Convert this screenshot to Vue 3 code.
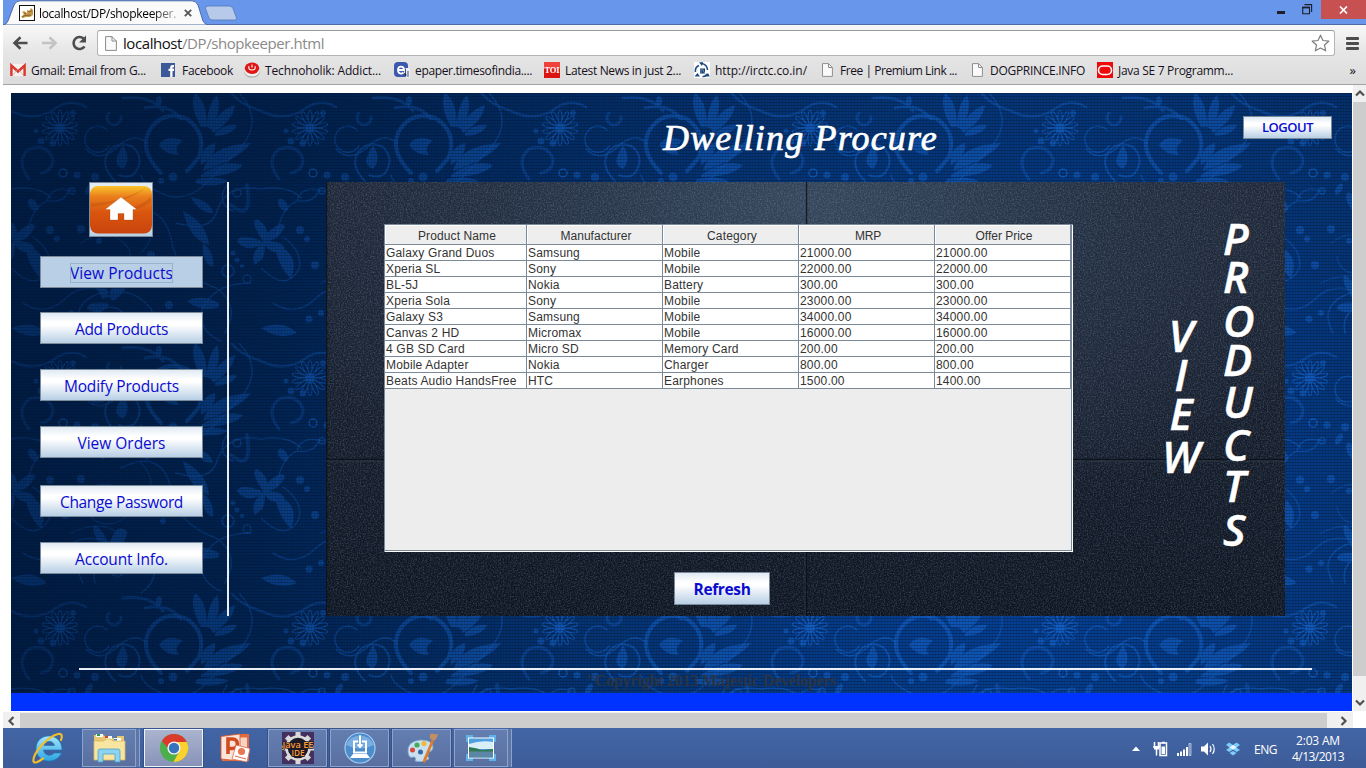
<script setup>
import { nextTick } from 'vue'

// Spreads or tightens the letters of a label so it fills the given width.
const vFit = {
  mounted(el, { value }) {
    nextTick(() => {
      el.style.letterSpacing = '0px'
      const w = el.getBoundingClientRect().width
      const n = el.textContent.length
      if (w && n > 1) el.style.letterSpacing = (value - w) / n + 'px'
    })
  },
}

const bookmarks = [
  { icon: 'gmail', text: 'Gmail: Email from G...', w: 115, slot: 151 },
  { icon: 'fb', text: 'Facebook', w: 51, slot: 83 },
  { icon: 'tech', text: 'Technoholik: Addict...', w: 116, slot: 150 },
  { icon: 'epaper', text: 'epaper.timesofindia....', w: 117, slot: 150 },
  { icon: 'toi', text: 'Latest News in just 2...', w: 116, slot: 150 },
  { icon: 'irctc', text: 'http://irctc.co.in/', w: 92, slot: 125 },
  { icon: 'doc', text: 'Free | Premium Link ...', w: 117, slot: 150 },
  { icon: 'doc', text: 'DOGPRINCE.INFO', w: 95, slot: 128 },
  { icon: 'oracle', text: 'Java SE 7 Programm...', w: 115, slot: 150 },
]

const menu = [
  { text: 'View Products', w: 103, gap: 0, active: true },
  { text: 'Add Products', w: 93, gap: 24 },
  { text: 'Modify Products', w: 115, gap: 25 },
  { text: 'View Orders', w: 88, gap: 25 },
  { text: 'Change Password', w: 123, gap: 27 },
  { text: 'Account Info.', w: 93, gap: 25 },
]

const heads = [
  { text: 'Product Name', w: 78 },
  { text: 'Manufacturer', w: 71 },
  { text: 'Category', w: 50 },
  { text: 'MRP', w: 26 },
  { text: 'Offer Price', w: 57 },
]
const rows = [
  ['Galaxy Grand Duos', 'Samsung', 'Mobile', '21000.00', '21000.00'],
  ['Xperia SL', 'Sony', 'Mobile', '22000.00', '22000.00'],
  ['BL-5J', 'Nokia', 'Battery', '300.00', '300.00'],
  ['Xperia Sola', 'Sony', 'Mobile', '23000.00', '23000.00'],
  ['Galaxy S3', 'Samsung', 'Mobile', '34000.00', '34000.00'],
  ['Canvas 2 HD', 'Micromax', 'Mobile', '16000.00', '16000.00'],
  ['4 GB SD Card', 'Micro SD', 'Memory Card', '200.00', '200.00'],
  ['Mobile Adapter', 'Nokia', 'Charger', '800.00', '800.00'],
  ['Beats Audio HandsFree', 'HTC', 'Earphones', '1500.00', '1400.00'],
]

const viewLetters = [
  ['V', 39], ['I', 39], ['E', 43], ['W', 40],
]
const productLetters = [
  ['P', 38], ['R', 44], ['O', 39], ['D', 42], ['U', 43], ['C', 41], ['T', 44], ['S', 40],
]
const petals = Array.from({ length: 14 }, (_, i) => (i * 360) / 14)
const teeth = Array.from({ length: 8 }, (_, i) => i * 45)
</script>

<template>
  <div class="screen">
    <!-- tab strip -->
    <div class="strip">
      <svg class="tabshape" width="240" height="25" viewBox="0 0 240 25">
        <path d="M202.500 8.500Q202 6 205 6H226Q229 6 230 8.500L233.500 18Q234 20 232 20H210Q207 20 206 18Z" fill="#b7cae9" stroke="#5378b8" stroke-width=".8" />
        <path d="M0 25Q3.500 24.500 5 21L11 5Q13 .8 17 .8H189Q193 .8 195 5L200 21Q202 25 206 25Z" fill="#fafafa" stroke="#4c6ba5" stroke-width="1" />
      </svg>
      <div class="tab">
        <svg width="16" height="16" viewBox="0 0 16 16">
          <rect x=".5" y=".5" width="15" height="15" fill="#fff" stroke="#111" />
          <path d="M2 12L5 9L3 7L5 6L8 8L8 5L10 6L12 3L14 5V10L11 12H7L4 13Z" fill="#c99a45" />
          <path d="M3 12L6 10.500L12 10M9 6L11 7L13 5.500M5 8L7 9" fill="none" stroke="#6b5534" stroke-width=".8" />
        </svg>
        <span class="tabtitle"><span v-fit="137">localhost/DP/shopkeeper.</span></span>
        <svg class="tabx" width="8" height="8" viewBox="0 0 8 8"><path d="M.8 .8L7.200 7.200M7.200 .8L.8 7.200" stroke="#555" stroke-width="1.800" /></svg>
      </div>
      <div class="winctl">
        <i class="min"></i>
        <svg width="11" height="11" viewBox="0 0 11 11"><path d="M.75 3.500V9.700H7.500V3.500Z M2.500 .6H9.600V8" fill="none" stroke="#1c1f2b" stroke-width="1.100" /><path d="M.2 3.500H8" stroke="#1c1f2b" stroke-width="1.800" /></svg>
        <div class="close"><svg width="9" height="8" viewBox="0 0 9 8"><path d="M1 .5L8 7.500M8 .5L1 7.500" stroke="#fff" stroke-width="1.700" /></svg></div>
      </div>
    </div>

    <!-- toolbar -->
    <div class="toolbar">
      <div class="nav">
        <svg width="80" height="18" viewBox="0 0 80 18">
          <path d="M15.500 9H3M8.500 3.200L2.500 9L8.500 14.800" fill="none" stroke="#4d4d4d" stroke-width="2.600" />
          <path d="M30 9H43M37.500 3.200L43.500 9L37.500 14.800" fill="none" stroke="#c3c3c3" stroke-width="2.600" />
          <path d="M72.500 12.500A6 6 0 1 1 71.500 4.500" fill="none" stroke="#4d4d4d" stroke-width="2.600" />
          <path d="M74 1.500V8.500H67Z" fill="#4d4d4d" />
        </svg>
        <div class="omni">
          <svg width="12" height="15" viewBox="0 0 12 15"><path d="M.6 .6H7L11.400 5V14.400H.6Z" fill="#fafafa" stroke="#8a8a8a" /><path d="M7 .6V5H11.400" fill="none" stroke="#8a8a8a" /></svg>
          <span class="url" v-fit="201">localhost<em>/DP/shopkeeper.html</em></span>
          <svg class="star" width="19" height="18" viewBox="0 0 19 18"><path d="M9.500 1.200L12 6.500L17.800 7.200L13.500 11L14.700 16.800L9.500 14L4.300 16.800L5.500 11L1.200 7.200L7 6.500Z" fill="#fff" stroke="#7d7d7d" stroke-width="1.200" stroke-linejoin="round" /></svg>
        </div>
        <div class="burger"><i></i><i></i><i></i></div>
      </div>
      <div class="marks">
        <div v-for="(b, i) in bookmarks" :key="i" class="mark" :style="{ width: b.slot + 'px' }">
          <svg width="16" height="16" viewBox="0 0 16 16">
            <g v-if="b.icon === 'gmail'">
              <rect x="0" y="2" width="16" height="12" fill="#f7f2f2" /><path d="M1.400 14V3.500L8 9.500L14.600 3.500V14" fill="none" stroke="#d93a30" stroke-width="2.500" /><path d="M3 13L6.500 8.500M13 13L9.500 8.500" stroke="#e2b6b2" />
            </g>
            <g v-else-if="b.icon === 'fb'">
              <rect x="0" y="1" width="14" height="14" fill="#3b5998" /><path d="M9.200 15V9H7.500V6.800H9.200V5.500C9.200 3.500 10.400 2.800 13 3.100V5.200C11.800 5.100 11.500 5.300 11.500 6V6.800H13.200L12.900 9H11.500V15Z" fill="#fff" />
            </g>
            <g v-else-if="b.icon === 'tech'">
              <ellipse cx="8" cy="10" rx="7.600" ry="5.600" fill="#999" /><ellipse cx="8" cy="8.800" rx="7.600" ry="5.800" fill="#eee" /><ellipse cx="8" cy="6.300" rx="7.200" ry="5.700" fill="#df1616" /><path d="M5 4.200Q4 8 8 8T11 4.200M8 2.500V5.500" fill="none" stroke="#fff" stroke-width="1.100" />
            </g>
            <g v-else-if="b.icon === 'epaper'">
              <rect width="14" height="15" rx="4" fill="#3a58ac" /><path d="M3.500 8H10C10 3.500 4 3.500 4 8C4 12 7.500 12.300 9.500 10.500" fill="none" stroke="#fff" stroke-width="1.800" /><path d="M10.500 6H16V16H12L12.500 12L10 11Z" fill="#e8eefb" /><path d="M11.500 6.500V14M14 9V15M12 13L10.500 12" stroke="#222" stroke-width=".8" />
            </g>
            <g v-else-if="b.icon === 'toi'">
              <rect width="16" height="16" fill="#dd1512" /><rect width="16" height="7" fill="#f0413a" /><text x="8" y="11.300" font-size="8.500" font-weight="bold" text-anchor="middle" textLength="15" font-family="Liberation Serif, serif" fill="#fff">TOI</text>
            </g>
            <g v-else-if="b.icon === 'irctc'">
              <rect width="16" height="16" fill="#fff" /><path d="M7.500 1.500A6.500 6.500 0 0 1 13.500 8M13 12Q11 15 8.500 14.500M1.500 10A6 6 0 0 1 5 3.500" fill="none" stroke="#1c4a80" stroke-width="1.600" /><path d="M.5 14.500L3.500 11L6 14.500ZM15.800 14.500H11L14 11ZM5 .5L9 0L8 4Z" fill="#1c4a80" /><rect x="6" y="6.500" width="5" height="5" fill="#163b6b" /><path d="M7 7V11M8.500 7L10.500 11" stroke="#a8c6e8" stroke-width=".7" />
            </g>
            <g v-else-if="b.icon === 'doc'">
              <path d="M3.500 1.600H9.500L13.400 5.500V14.400H3.500Z" fill="#fafafa" stroke="#8f8f8f" /><path d="M9.500 1.600V5.500H13.400" fill="none" stroke="#8f8f8f" />
            </g>
            <g v-else>
              <rect width="16" height="16" fill="#ee0a0a" /><rect x="1.500" y="4" width="13" height="8.500" rx="4.200" fill="none" stroke="#fff" stroke-width="1.600" />
            </g>
          </svg>
          <span v-fit="b.w">{{ b.text }}</span>
        </div>
        <span class="more">»</span>
      </div>
    </div>

    <!-- viewport -->
    <div class="view">
      <div class="page">
        <div class="backdrop">
          <svg width="1341" height="600">
            <defs>
              <radialGradient id="base" gradientUnits="userSpaceOnUse" cx="1010" cy="420" r="1000">
                <stop offset="0" stop-color="#06429a" /><stop offset=".45" stop-color="#053372" /><stop offset=".8" stop-color="#01214d" /><stop offset="1" stop-color="#011c43" />
              </radialGradient>
              <radialGradient id="glow" gradientUnits="userSpaceOnUse" cx="960" cy="430" r="950">
                <stop offset="0" stop-color="#fff" stop-opacity=".85" /><stop offset=".5" stop-color="#fff" stop-opacity=".65" /><stop offset="1" stop-color="#fff" stop-opacity=".32" />
              </radialGradient>
              <mask id="fade"><rect width="1341" height="600" fill="url(#glow)" /></mask>
              <pattern id="flora" width="250" height="250" patternUnits="userSpaceOnUse">
                <g fill="none" stroke="#1768d4" stroke-width="1.500" stroke-linecap="round">
                  <g transform="translate(49 35)" stroke-width="1">
                    <ellipse v-for="a in petals" :key="a" cx="0" cy="-11" rx="2" ry="7" :transform="`rotate(${a})`" />
                    <circle r="4" fill="#1768d4" />
                  </g>
                  <path d="M98 53A13 13 0 1 1 96 37M75 56Q90 72 111 50Q125 40 136 50" opacity=".7" />
                  <path d="M150 80Q128 58 138 38Q152 16 176 26Q196 40 188 64Q180 74 176 78" stroke-width="4" opacity=".7" />
                  <path d="M134 15Q158 10 170 26M112 5Q140 2 152 18" stroke-width="3" opacity=".6" />
                  <path d="M104 88Q88 72 98 58Q108 47 122 54Q134 66 124 80Q118 86 108 82" stroke-width="2" opacity=".7" />
                  <path d="M18 86Q4 68 18 56Q36 50 42 66Q42 78 30 80" stroke-width="3" opacity=".5" />
                  <path d="M228 0Q252 25 232 52Q210 76 190 95Q170 110 150 100Q132 92 130 82" opacity=".6" />
                  <path d="M0 18Q25 30 45 15Q60 5 75 14M250 18Q225 10 218 -4" stroke-width="2.500" opacity=".55" />
                  <path d="M98 20A7 7 0 1 0 110 24" opacity=".5" stroke-width="3" /><circle cx="52" cy="80" r="4" /><circle cx="226" cy="100" r="4" opacity=".7" /><circle cx="61" cy="98" r="3" opacity=".7" />
                  <path d="M250 96Q215 90 206 118Q200 140 165 130M0 96Q28 92 40 105M216 92Q204 110 222 118" opacity=".65" />
                  <path d="M62 98Q40 92 36 108Q20 115 16 142M36 108Q55 110 58 96" opacity=".6" />
                  <path d="M0 175Q25 200 38 176Q42 158 22 144M12 210Q35 225 55 205Q70 190 96 198" opacity=".6" />
                  <path d="M72 240Q58 214 84 202Q120 190 140 216Q150 236 130 250M84 240Q80 222 96 214Q114 214 114 228Q108 238 100 230" opacity=".65" />
                  <path d="M110 125Q150 105 160 145Q164 180 205 195Q230 212 214 240M240 190Q200 190 190 220Q190 240 210 248" opacity=".6" />
                  <circle cx="217" cy="178" r="6" opacity=".6" stroke-width="2" /><circle cx="236" cy="186" r="4" opacity=".6" />
                  <path d="M220 112Q242 130 236 92" stroke-width="4" opacity=".5" />
                  <path d="M70 150Q98 130 118 156Q124 172 104 180Q80 184 76 164M130 120Q150 140 130 160M60 190Q90 175 110 192" opacity=".45" />
                </g>
                <g fill="#1768d4" opacity=".68">
                  <path d="M190 34Q178 12 184 0Q196 8 196 34ZM196 34Q196 12 206 2Q212 16 200 36ZM200 36Q206 18 224 12Q222 28 202 40ZM204 40Q214 30 226 32Q222 42 204 43Z" />
                  <path d="M192 78Q198 52 240 50Q228 66 192 78ZM190 82Q212 66 232 72Q222 84 190 84ZM186 86Q206 82 218 88Q202 96 184 90ZM190 72Q188 54 204 50Q206 62 190 72Z" />
                  <path d="M148 52Q156 40 172 48Q162 54 168 62Q154 62 148 52Z" />
                  <path d="M112 52Q121 66 112 76Q103 72 106 64Q108 58 112 52Z" />
                  <path d="M2 148Q-12 128 -4 126Q6 132 6 140Q22 126 24 134Q18 146 8 148Q28 150 22 160Q8 160 4 152Q4 170 -6 170Q-10 158 2 148Z" />
                  <path d="M252 148Q238 128 246 126Q256 132 256 140ZM252 148Q228 140 226 148Q234 160 250 152ZM252 150Q238 160 244 172Q256 164 252 150Z" />
                  <path d="M172 118Q196 130 198 152Q178 146 172 118ZM192 150Q204 160 202 174Q190 170 192 150ZM180 104Q200 108 202 120Q188 120 180 104Z" />
                  <path d="M92 206Q78 186 84 182Q94 188 98 204ZM98 204Q104 178 116 188Q116 200 102 208ZM96 210Q76 208 76 216Q88 224 98 212Z" />
                  <path d="M208 210Q190 200 176 208Q190 220 208 214ZM14 152Q40 160 30 186Q16 172 14 152ZM0 235Q22 226 36 240Q18 248 0 235Z" />
                  <circle cx="30" cy="48" r="3.500" /><circle cx="42" cy="50" r="3.500" /><circle cx="25" cy="38" r="2.500" /><circle cx="66" cy="82" r="3.500" /><circle cx="84" cy="84" r="4" /><circle cx="162" cy="84" r="4.500" /><circle cx="150" cy="88" r="3" /><circle cx="62" cy="20" r="3" /><circle cx="39" cy="137" r="4" /><circle cx="46" cy="146" r="3" /><circle cx="70" cy="136" r="4" /><circle cx="88" cy="148" r="3" /><circle cx="54" cy="172" r="4" /><circle cx="48" cy="226" r="3.500" /><circle cx="60" cy="220" r="3" /><circle cx="140" cy="162" r="4" /><circle cx="152" cy="178" r="3" /><circle cx="158" cy="212" r="4" /><circle cx="170" cy="228" r="3" /><circle cx="222" cy="160" r="2.500" /><circle cx="226" cy="167" r="2.500" /><circle cx="231" cy="173" r="2" /><circle cx="122" cy="108" r="3.500" /><circle cx="136" cy="114" r="2.500" />
                  <ellipse cx="78" cy="96" rx="3" ry="6" transform="rotate(30 78 96)" /><ellipse cx="148" cy="8" rx="3" ry="5" /><ellipse cx="22" cy="112" rx="4" ry="7" transform="rotate(-35 22 112)" /><ellipse cx="90" cy="108" rx="4" ry="9" transform="rotate(-20 90 108)" />
                </g>
              </pattern>
              <pattern id="weave" width="3" height="3" patternUnits="userSpaceOnUse"><path d="M0 .5H3" stroke="#000c24" stroke-width="1" opacity=".28" /><path d="M.5 0V3" stroke="#000c24" stroke-width="1" opacity=".12" /></pattern>
            </defs>
            <rect width="1341" height="600" fill="url(#base)" />
            <g mask="url(#fade)"><rect width="1341" height="600" fill="url(#flora)" /></g>
            <rect width="1341" height="600" fill="url(#weave)" />
          </svg>
        </div>

        <header class="head">
          <h1><span v-fit="275">Dwelling Procure</span></h1>
          <button class="btn logout"><span v-fit="51">LOGOUT</span></button>
        </header>

        <div class="body">
          <aside class="side">
            <div class="home">
              <svg width="62" height="53" viewBox="0 0 62 53">
                <defs><linearGradient id="org" x1="0" y1="0" x2="0" y2="1"><stop offset="0" stop-color="#fbc52c" /><stop offset=".22" stop-color="#ea7f1c" /><stop offset=".55" stop-color="#d9560f" /><stop offset="1" stop-color="#c9430c" /></linearGradient></defs>
                <rect x="0" y="3" width="62" height="47.500" rx="8" fill="url(#org)" />
                <path d="M1 20Q30 20 56 5Q40 18 1 24ZM30 28Q50 24 61 14V19Q50 28 30 28Z" fill="#b9480c" opacity=".35" />
                <path d="M31 14L15 26.500H20V37H28V30.500H34V37H43V26.500H47Z" fill="#fff" stroke="#a93a08" stroke-opacity=".35" stroke-width=".8" />
              </svg>
            </div>
            <button v-for="m in menu" :key="m.text" class="btn item" :class="{ active: m.active }" :style="{ marginTop: m.gap + 'px' }"><span v-fit="m.w">{{ m.text }}</span></button>
          </aside>

          <main class="panel">
            <svg class="leather" width="959" height="434">
              <filter id="grain" x="0" y="0" width="100%" height="100%"><feTurbulence type="fractalNoise" baseFrequency=".7" numOctaves="2" seed="4" /><feColorMatrix type="matrix" values="0 0 0 0 .5  0 0 0 0 .6  0 0 0 0 .75  1.800 0 0 0 -.72" /></filter>
              <rect width="959" height="434" filter="url(#grain)" opacity=".28" />
              <path d="M480.500 0V434M0 277.500H959M.5 0V434" stroke="#080c14" stroke-width="1.500" opacity=".75" />
              <path d="M479 0V434M0 279H959" stroke="#4a5666" opacity=".4" />
            </svg>
            <div class="sheetcol">
              <div class="sheet">
                <div class="tr th"><span v-for="h in heads" :key="h.text"><b v-fit="h.w">{{ h.text }}</b></span></div>
                <div v-for="(r, i) in rows" :key="i" class="tr"><span v-for="(c, j) in r" :key="j">{{ c }}</span></div>
              </div>
              <button class="btn refresh"><span v-fit="57">Refresh</span></button>
            </div>
            <div class="word first"><span v-for="(l, i) in viewLetters" :key="i" :style="{ height: l[1] + 'px' }">{{ l[0] }}</span></div>
            <div class="word second"><span v-for="(l, i) in productLetters" :key="i" :style="{ height: l[1] + 'px' }">{{ l[0] }}</span></div>
          </main>
        </div>

        <footer class="foot"><span v-fit="250">"Copyright 2013 Majestic Developers</span></footer>
        <div class="band"></div>
      </div>
      <div class="vbar">
        <svg width="13" height="17" viewBox="0 0 13 17"><path d="M3 10.500L7 6.500L11 10.500" fill="none" stroke="#505050" stroke-width="2.200" /></svg>
        <div class="thumb"></div>
        <svg width="13" height="35" viewBox="0 0 13 35"><path d="M3 24.500L7 28.500L11 24.500" fill="none" stroke="#505050" stroke-width="2.200" /></svg>
      </div>
    </div>
    <div class="hbar">
      <svg width="17" height="15" viewBox="0 0 17 15"><path d="M10.500 4L6.500 8L10.500 12" fill="none" stroke="#505050" stroke-width="2.200" /></svg>
      <div class="thumb"></div>
      <svg width="26" height="15" viewBox="0 0 26 15"><path d="M14.500 4L18.500 8L14.500 12" fill="none" stroke="#505050" stroke-width="2.200" /></svg>
    </div>

    <!-- taskbar -->
    <div class="task">
      <div class="slot ie">
        <svg width="34" height="34" viewBox="0 0 34 34">
          <defs><linearGradient id="ie" x1="0" y1="0" x2="0" y2="1"><stop offset="0" stop-color="#a4e6fb" /><stop offset="1" stop-color="#2ca4e2" /></linearGradient></defs>
          <path d="M31 19H12.500C13 24.500 20.500 26 23 22H30.500C25 34.500 5 32 5 17.500C5 1 31 0 31 19ZM13 14.500H23.500C22.500 9 14 9 13 14.500Z" fill="url(#ie)" stroke="#1c78bd" stroke-width=".7" />
          <path d="M12 27.500Q4 33.500 2.500 30.500Q1.500 25 10 15Q19 5 27 3Q32.500 2 30 9" fill="none" stroke="#f0bd2d" stroke-width="2.200" stroke-linecap="round" />
        </svg>
      </div>
      <div class="slot tb stack">
        <svg width="34" height="32" viewBox="0 0 34 32"><path d="M2 3H12L14 6H25V4H32V27H2Z" fill="#e6c873" /><path d="M4 2H11V5H4ZM14 4H20V7H14ZM22 6H29V9H22Z" fill="#fff" /><path d="M5 2H8V4H5Z" fill="#24a04a" /><path d="M13 4H16V6H13Z" fill="#d14b32" /><path d="M22 7H25V8.500H22Z" fill="#2f83cd" /><path d="M2 9H12L14 7H19L21 9H33V28H2Z" fill="#f8e6a0" stroke="#d9b95e" stroke-width=".8" /><path d="M6 30V19Q6 17 8 17H26Q28 17 28 19V30H23V22H11V30Z" fill="#8cd4ef" stroke="#4f9fca" stroke-width=".8" /></svg>
      </div>
      <div class="slot tb on">
        <svg width="30" height="30" viewBox="0 0 30 30"><circle cx="15" cy="15" r="14" fill="#4caf4a" /><path d="M15 8.500H27.500A14 14 0 0 1 14.500 29L21 17Z" fill="#fbd12e" /><path d="M2.900 8A14 14 0 0 1 27.700 9H15L9 15Z" fill="#db3a2c" /><circle cx="15" cy="15" r="6.600" fill="#f3f3f3" /><circle cx="15" cy="15" r="5.200" fill="#3573bd" /></svg>
      </div>
      <div class="slot ppt">
        <svg width="30" height="30" viewBox="0 0 30 30"><path d="M2 3L22 1H29V28H2Z" fill="#e56a3d" /><path d="M4 4.500H27V26H4Z" fill="#f7d3c3" /><path d="M1 3.500L20 1V28L1 26Z" fill="#fbe4da" stroke="#d9532a" stroke-width=".8" /><path d="M8 21V6H12.500C19 6 19 15.500 12.500 15.500H8" fill="none" stroke="#d24a20" stroke-width="3.600" /><path d="M16 12L30 15.500L27 29L12 26Z" fill="#fff" stroke="#df6b45" stroke-width=".8" /><circle cx="21.500" cy="18.500" r="3.600" fill="#e77852" /><path d="M15 23L26 26" stroke="#df6b45" /></svg>
      </div>
      <div class="slot tb">
        <svg width="32" height="32" viewBox="0 0 32 32"><rect width="32" height="32" fill="#43305f" /><g fill="#d9d9d9"><rect v-for="t in teeth" :key="t" x="13.500" y="0" width="5" height="7" :transform="`rotate(${t} 16 16)`" /></g><circle cx="16" cy="16" r="11.500" fill="#1c1a26" stroke="#dcdcdc" stroke-width="2.500" /><g font-family="Open Sans, sans-serif" font-size="9" fill="#ff9a3a" text-anchor="middle" font-weight="600" paint-order="stroke" stroke="#1c1a26" stroke-width="1.500"><text x="16" y="15.500" textLength="31" lengthAdjust="spacingAndGlyphs">Java EE</text><text x="16" y="24" textLength="13" lengthAdjust="spacingAndGlyphs">IDE</text></g></svg>
      </div>
      <div class="slot tb">
        <svg width="32" height="32" viewBox="0 0 32 32"><circle cx="16" cy="16" r="15" fill="#4b8ccd" stroke="#a6cdf0" stroke-width="1.200" /><path d="M2 13A15 15 0 0 1 30 13Q16 20 2 13Z" fill="#8bbce8" opacity=".7" /><rect x="10" y="9.500" width="12" height="11" fill="none" stroke="#fff" stroke-width="2" /><path d="M9 22H23L26 26H6Z" fill="#fff" /><path d="M14.500 3H17.500V12H20.500L16 17L11.500 12H14.500Z" fill="#fff" stroke="#4b8ccd" stroke-width=".7" /></svg>
      </div>
      <div class="slot tb">
        <svg width="32" height="32" viewBox="0 0 32 32"><path d="M2 20Q1 9 15 8Q27 8 27 16Q26 20 22 20Q21 24 23 27Q16 31 9 29Q11 25 7 25Q3 27 2 20Z" fill="#c8e0f2" stroke="#7ca9d0" stroke-width=".8" /><circle cx="6.500" cy="18" r="2.500" fill="#d9473b" /><circle cx="11" cy="13" r="2.600" fill="#41ad55" /><circle cx="18" cy="11.500" r="2.600" fill="#f1b93a" /><circle cx="14.500" cy="20" r="2.500" fill="#33699f" /><path d="M25.500 8L28 9L19 31Q16 30 17.500 27Z" fill="#df7c28" /><path d="M24.500 7Q22.500 2 26 1.500Q29.500 3 32 1.500Q31 7 28 9Z" fill="#c19062" /></svg>
      </div>
      <div class="slot tb stack last">
        <svg width="30" height="26" viewBox="0 0 30 26"><path d="M0 0H7V3H3V7H0ZM30 0H23V3H27V7H30ZM0 26H7V23H3V19H0ZM30 26H23V23H27V19H30Z" fill="#5fb2e8" /><rect x="2" y="2.500" width="26" height="21" fill="#fff" /><rect x="3" y="3.500" width="24" height="19" fill="#4f9fe0" /><path d="M3 9Q15 5 27 7V14H3Z" fill="#d8effa" /><path d="M3 12Q11 13 16 15L27 14V17H3Z" fill="#2f7a55" /><path d="M3 16.500H27V22.500H3Z" fill="#5c86a6" /></svg>
      </div>
      <div class="tray">
        <svg width="108" height="18" viewBox="0 0 108 18">
          <path d="M0 11L4 6.500L8 11Z" fill="#fff" />
          <g fill="none" stroke="#fff" stroke-width="1.500"><rect x="28" y="3" width="6.500" height="12.500" /><path d="M30 2.500H33M22.500 2V6M26.500 2V6M21 7H28M24.500 8V15.500" /></g><path d="M22 6H27V9.500H22ZM29.500 6.500H33V14H29.500Z" fill="#fff" />
          <path d="M45 13H47V16H45ZM48 11.500H50V16H48ZM51 9.500H53V16H51ZM54 7H56V16H54Z" fill="#fff" /><path d="M57 3.500H59V15.500H57Z" fill="#6681b5" stroke="#d5ddec" stroke-width=".7" />
          <path d="M69 6.500H72L76 2.500V15.500L72 11.500H69Z" fill="#fff" /><path d="M78 6Q80 9 78 12M80.500 4Q84 9 80.500 14" fill="none" stroke="#fff" stroke-width="1.200" />
          <path d="M97 2.500L101 5L104.500 2.500L108 5L104.500 7.500L108 10L104.500 12L101 9.500L97.500 12L94 10L97.500 7.500L94 5ZM97.500 13L101 11L104.500 13L101 15.500Z" fill="#7ccdfa" /><path d="M97.500 7.500L101 5L104.500 7.500L101 9.500Z" fill="#eaf8ff" />
        </svg>
        <span class="eng"><span v-fit="23">ENG</span></span>
        <div class="clock"><div><span v-fit="44">2:03 AM</span></div><div><span v-fit="52">4/13/2013</span></div></div>
      </div>
    </div>
  </div>
</template>

<style>
body { margin: 0; background: #fff; overflow: hidden; }
</style>

<style scoped>
.screen { width: 1366px; height: 768px; padding-left: 3px; box-sizing: border-box; display: flex; flex-direction: column; overflow: hidden; background: #fff; font-family: "Open Sans", "Noto Sans", sans-serif; }
svg { display: block; flex: none; }
span { white-space: pre; }
button { padding: 0; margin: 0; font: inherit; }

.strip { height: 25px; flex: none; background: #6896ea; box-shadow: inset 0 -1px #4c6ba5; display: flex; justify-content: space-between; position: relative; }
.tabshape { position: absolute; left: 0; top: 0; }
.tab { position: relative; display: flex; align-items: center; height: 26px; padding-left: 16px; width: 180px; }
.tabtitle { margin-left: 4px; width: 137px; font-size: 12px; color: #000; -webkit-mask-image: linear-gradient(90deg, #000 82%, rgba(0,0,0,.3)); mask-image: linear-gradient(90deg, #000 82%, rgba(0,0,0,.3)); }
.tabx { margin-left: 8px; }
.winctl { display: flex; align-items: flex-start; }
.min { width: 8px; height: 3px; background: #1c1f2b; margin: 11px 17px 0 0; }
.winctl > svg { margin: 4px 8px 0 0; }
.close { width: 45px; height: 19px; background: #c75050; display: flex; align-items: center; justify-content: center; }

.toolbar { height: 60px; flex: none; box-sizing: border-box; border-bottom: 1px solid #a3a3a3; background: linear-gradient(#f8f8f8, #e6e6e6 45%, #dcdcdc); }
.nav { height: 31px; padding-top: 5px; box-sizing: border-box; display: flex; align-items: center; }
.nav > svg { margin: 0 5px 0 9px; }
.omni { width: 1238px; height: 26px; box-sizing: border-box; border: 1px solid #b4b4b4; border-top-color: #9a9a9a; border-radius: 3px; background: #fff; display: flex; align-items: center; padding: 0 4px 0 7px; }
.url { margin-left: 6px; font-size: 15px; line-height: 20px; color: #111; }
.url em { font-style: normal; color: #8a8a8a; }
.star { margin-left: auto; }
.burger { margin-left: 11px; display: grid; gap: 2px; }
.burger i { width: 13px; height: 3px; border-radius: 1px; background: #4d4d4d; }
.marks { height: 28px; padding-left: 7px; display: flex; align-items: center; font-size: 12px; color: #16101c; }
.mark { display: flex; align-items: center; gap: 5px; flex: none; }
.more { margin-left: auto; margin-right: 10px; font-size: 13px; line-height: 14px; }

.view { height: 626px; flex: none; display: flex; }
.page { width: 1341px; margin: 8px 1px 0 8px; height: 618px; position: relative; flex: none; }
.backdrop { position: absolute; inset: 0; }
.head, .body, .foot, .band { position: relative; }
.head { height: 89px; display: flex; justify-content: flex-end; }
h1 { margin: 23px 304px 0 0; width: 276px; font: italic 400 36px/44px "Monotype Corsiva", "Z003", "URW Chancery L", "Liberation Serif", serif; color: #fff; -webkit-text-stroke: .7px #fff; }
.btn { display: flex; align-items: center; justify-content: center; border: 1px solid #7a8a99; background: linear-gradient(#dfe9f3, #fff 30%, #fff 40%, #b8cfe5); color: #0b0bd0; box-sizing: border-box; }
.logout { width: 89px; height: 23px; margin: 23px 20px 0 0; font-size: 13px; font-weight: 600; line-height: 18px; padding-bottom: 2px; }
.body { height: 434px; display: flex; }
.side { width: 218px; box-sizing: border-box; border-right: 2px solid #e9eef5; padding-left: 29px; flex: none; }
.home { width: 64px; height: 55px; box-sizing: border-box; border: 1px solid #7a8a99; background: linear-gradient(#dfe9f3, #fff 40%, #b8cfe5); margin: 0 0 19px 49px; }
.item { width: 163px; height: 32px; font-size: 15.500px; line-height: 20px; padding-top: 1px; }
.item.active { background: #b8cfe5; }
.item.active span { outline: 1px solid #9ab3cc; outline-offset: -1px; }
.panel { position: relative; width: 959px; margin-left: 97px; display: flex; background: radial-gradient(ellipse 600px 330px at 480px 20px, #34465b, rgba(38,51,71,.75) 50%, rgba(24,32,46,0)), linear-gradient(#1b2332, #151d2b 60%, #0e1522); }
.leather { position: absolute; left: 0; top: 0; }
.sheetcol { position: relative; margin: 42px 0 0 58px; width: 689px; flex: none; }
.sheet { height: 328px; box-sizing: border-box; background: #ededed; border: 1px solid #7a8a99; border-right: 0; box-shadow: inset -1px -1px #fff, inset -2px -2px #7a8a99; border-bottom: 0; font: 12px "Liberation Sans", sans-serif; color: #333; }
.tr { display: grid; grid-template-columns: 142px 136px 136px 136px 136px; grid-template-rows: 16px; width: 686px; height: 16px; background: #fff; }
.tr span { box-sizing: border-box; height: 16px; border-right: 1px solid #7a8a99; border-bottom: 1px solid #7a8a99; padding-left: 1px; line-height: 16px; letter-spacing: .18px; }
.tr.th { height: 20px; grid-template-rows: 20px; }
.tr.th span { height: 20px; text-align: center; line-height: 22px; background: #eee; box-shadow: inset 1px 1px #fff; padding: 0 0 0 3px; }
.th b { font-weight: 400; display: inline-block; }
.refresh { width: 96px; height: 33px; margin: 20px 0 0 290px; font-size: 15.500px; font-weight: 700; line-height: 20px; }
.word { position: relative; display: flex; flex-direction: column; font: italic 600 43.500px/31px "Open Sans", sans-serif; color: #fff; -webkit-text-stroke: .5px #fff; }
.word span { display: block; flex: none; }
.first { width: 44px; margin: 138px 0 0 86px; align-items: center; }
.second { width: 40px; margin: 41px 0 0 20px; }
.foot { margin: 52px 40px 0 68px; height: 25px; box-sizing: border-box; border-top: 2px solid #e9eef5; font: bold 16px/21px "Liberation Serif", serif; color: #2a3442; padding-left: 507px; }
.band { height: 18px; background: #0033ff; }
.vbar { width: 13px; background: #f0f0f0; display: flex; flex-direction: column; flex: none; }
.vbar .thumb { height: 574px; background: #cdcdcd; }
.hbar { height: 17px; flex: none; background: #f0f0f0; display: flex; align-items: center; width: 1350px; border-top: 1px solid #fff; box-sizing: border-box; }
.hbar .thumb { height: 15px; flex: 1; background: #cdcdcd; }

.task { height: 40px; flex: none; background: linear-gradient(#4265a5, #3d5c98); display: flex; align-items: flex-start; padding-top: 1px; box-sizing: border-box; }
.slot { height: 38px; display: flex; align-items: center; justify-content: center; box-sizing: border-box; flex: none; }
.ie { width: 79px; padding-left: 11px; }
.tb { width: 59px; margin-right: 3px; border: 1px solid #8fa2c8; background: linear-gradient(#647eb1, #596fa0); box-shadow: 0 0 0 1px rgba(35,55,100,.35); }
.stack { width: 54px; margin-right: 8px; box-shadow: 3px 0 0 #5d76a9, 4px 0 0 #8fa2c8; }
.on { background: linear-gradient(#aab4ce, #8792b8); border-color: #eef1f8; }
.ppt { width: 62px; padding-right: 4px; }
.tray { margin-left: auto; display: flex; align-items: center; height: 40px; color: #fff; font-size: 12px; }
.eng { margin-left: 14px; width: 23px; }
.clock { width: 89px; text-align: center; line-height: 16.500px; }
.clock div { padding-right: 7px; }
</style>
